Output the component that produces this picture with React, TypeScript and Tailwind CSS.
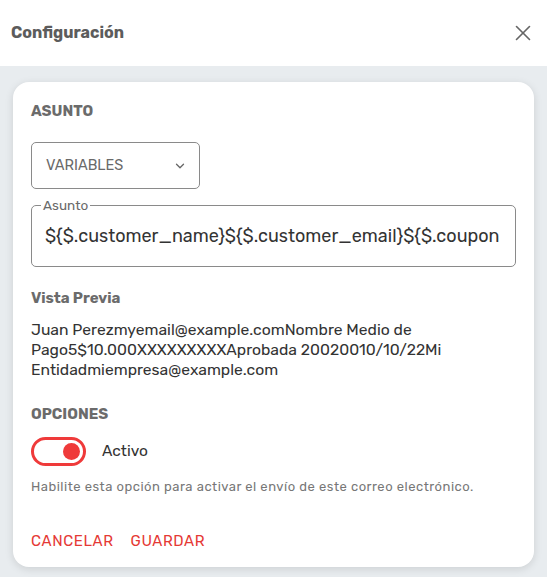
import { X, ChevronDown } from "lucide-react";

const App: React.FC = () => {
  return (
    <div className="w-[547px] h-[577px] flex flex-col bg-[#e8ecef] overflow-hidden" style={{ fontFamily: "Rubik, Inter, 'Noto Sans', sans-serif" }}>
      {/* Header */}
      <div className="h-[66px] bg-white flex items-center justify-between pl-[11px] pr-[11px] shrink-0">
        <span className="text-[16px] font-bold text-[#5c5c5c]">Configuración</span>
        <X className="w-[26px] h-[26px] text-[#666]" strokeWidth={1.5} />
      </div>

      <div className="flex-1 px-[13px] pt-[16px] pb-[10px] flex">
        <div className="flex-1 bg-white rounded-[16px] shadow-[0_2px_8px_rgba(0,0,0,0.12)] px-[18px] pt-[20px] flex flex-col">
          <div className="text-[15px] font-bold text-[#6b6b6b] leading-[18px]">ASUNTO</div>

          <div className="mt-[22px] w-[169px] h-[47px] border border-[#8a8a8a] rounded-[5px] flex items-center justify-between pl-[14px] pr-[12px]">
            <span className="text-[14.5px] text-[#6a6a6a]">VARIABLES</span>
            <ChevronDown className="w-[14px] h-[14px] text-[#666]" strokeWidth={2.2} />
          </div>

          <fieldset className="mt-[9px] h-[69px] border border-[#8a8a8a] rounded-[5px] pl-[13px] pr-[12px] relative">
            <legend className="px-[2px] -ml-[4px] text-[13.5px] text-[#6a6a6a] leading-[14px]">Asunto</legend>
            <div className="pt-[11px] text-[18px] text-[#333] whitespace-nowrap overflow-hidden">
              {"${$.customer_name}${$.customer_email}${$.coupon"}
            </div>
          </fieldset>

          <div className="mt-[22px] text-[15px] font-bold text-[#6b6b6b] leading-[18px]">Vista Previa</div>
          <p className="mt-[13px] text-[15.7px] leading-[20px] text-[#333]">
            Juan Perezmyemail@example.comNombre Medio de Pago5$10.000XXXXXXXXXAprobada 20020010/10/22Mi Entidadmiempresa@example.com
          </p>

          <div className="mt-[25px] text-[15px] font-bold text-[#6b6b6b] leading-[18px]">OPCIONES</div>
          <div className="mt-[14px] flex items-center gap-[16px]">
            <div className="w-[55px] h-[29px] rounded-full border-[3px] border-[#ef3a3a] flex items-center justify-end pr-[3px]">
              <div className="w-[17px] h-[17px] rounded-full bg-[#ef3a3a]" />
            </div>
            <span className="text-[15.5px] text-[#333]">Activo</span>
          </div>
          <p className="mt-[11px] text-[13px] tracking-[0.5px] text-[#777]">
            Habilite esta opción para activar el envío de este correo electrónico.
          </p>

          <div className="mt-[33px] flex gap-[17px] text-[15px] tracking-[0.6px] text-[#e53935]">
            <span>CANCELAR</span>
            <span>GUARDAR</span>
          </div>
        </div>
      </div>
    </div>
  );
};

export default App;
